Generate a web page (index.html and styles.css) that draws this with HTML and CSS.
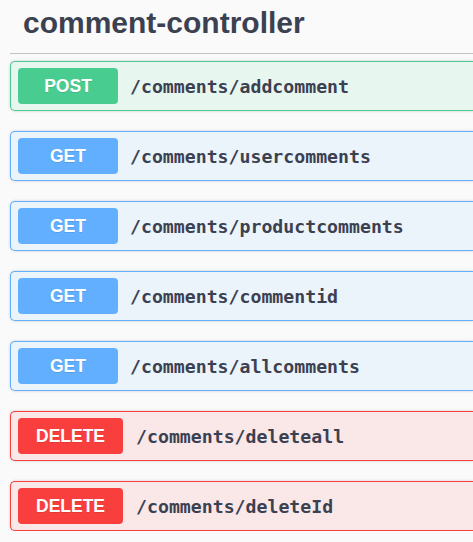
FILE: index.html
```html
<!DOCTYPE html>
<html>
<head>
<meta charset="utf-8">
<link rel="stylesheet" href="styles.css">
</head>
<body>
<div class="tag-section">
  <h3 class="tag-title">comment-controller</h3>
  <div class="ops">
    <div class="op op-post"><span class="method">POST</span><span class="path">/comments/addcomment</span></div>
    <div class="op op-get"><span class="method">GET</span><span class="path">/comments/usercomments</span></div>
    <div class="op op-get"><span class="method">GET</span><span class="path">/comments/productcomments</span></div>
    <div class="op op-get"><span class="method">GET</span><span class="path">/comments/commentid</span></div>
    <div class="op op-get"><span class="method">GET</span><span class="path">/comments/allcomments</span></div>
    <div class="op op-delete"><span class="method">DELETE</span><span class="path">/comments/deleteall</span></div>
    <div class="op op-delete"><span class="method">DELETE</span><span class="path">/comments/deleteId</span></div>
  </div>
</div>
</body>
</html>
```

FILE: styles.css
```css
html, body {
  margin: 0;
  padding: 0;
  background: #fafafa;
  overflow: hidden;
}
body {
  font-family: "Liberation Sans", Arial, sans-serif;
  color: #3b4151;
}
.tag-section {
  padding-left: 10px;
}
.tag-title {
  margin: 0;
  padding: 5px 0 13px 13px;
  font-size: 30px;
  line-height: 35px;
  font-weight: 700;
  color: #3b4151;
  border-bottom: 1px solid rgba(59, 65, 81, 0.3);
}
.ops {
  display: flex;
  flex-direction: column;
  gap: 20px;
  margin-top: 7px;
}
.op {
  display: flex;
  align-items: center;
  height: 50px;
  box-sizing: border-box;
  padding: 6px 7px;
  border: 1px solid;
  border-right: none;
  border-radius: 5px 0 0 5px;
  box-shadow: 0 0 3px rgba(0, 0, 0, 0.19);
}
.method {
  display: flex;
  align-items: center;
  justify-content: center;
  box-sizing: border-box;
  min-width: 100px;
  height: 36px;
  padding: 0 18px;
  border-radius: 4px;
  color: #fff;
  font-family: "Liberation Sans", Arial, sans-serif;
  font-size: 17.5px;
  font-weight: 700;
  text-shadow: 0 1px 0 rgba(0, 0, 0, 0.1);
}
.path {
  margin-left: 12px;
  font-family: "DejaVu Sans Mono", "Liberation Mono", monospace;
  font-size: 18.2px;
  font-weight: 700;
  color: #3b4151;
  white-space: nowrap;
}
.op-delete .path { margin-left: 13px; }
.op-post { border-color: #49cc90; background: #e8f6f0; }
.op-post .method { background: #49cc90; }
.op-get { border-color: #61affe; background: #ebf3fb; }
.op-get .method { background: #61affe; }
.op-delete { border-color: #f93e3e; background: #fae7e7; }
.op-delete .method { background: #f93e3e; }
```
